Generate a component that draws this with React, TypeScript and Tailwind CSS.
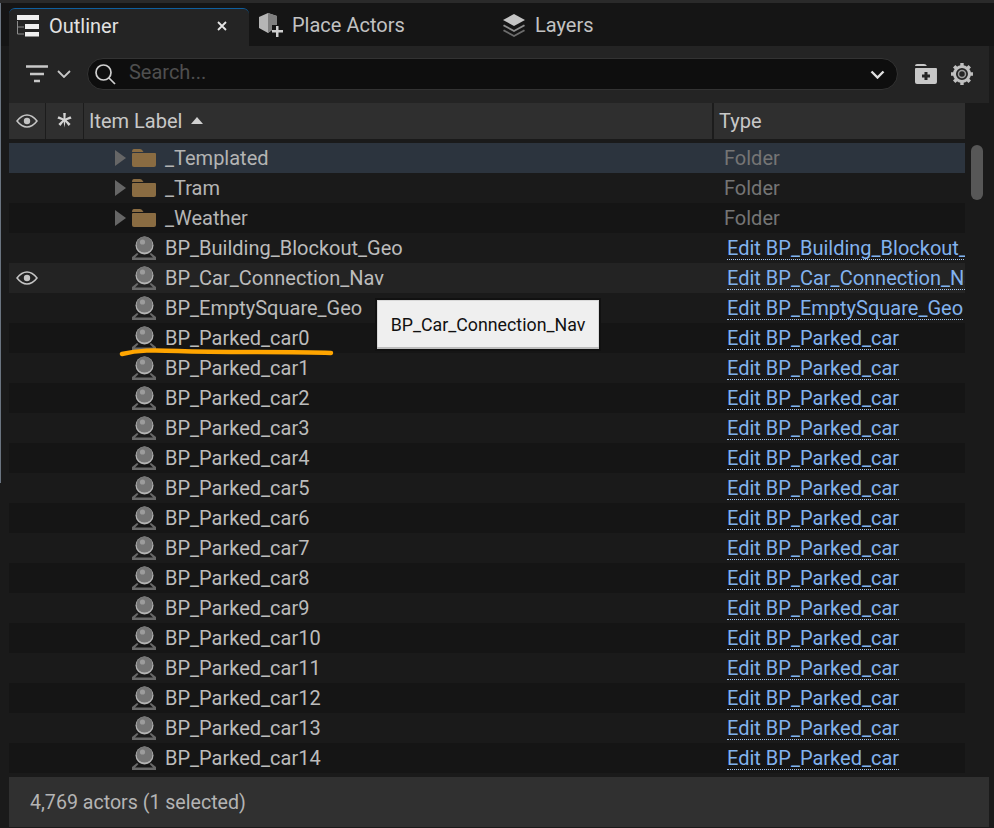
const F = "font-['Roboto',sans-serif]";

function Eye() {
  return (
    <svg width="22" height="14" viewBox="0 0 22 14" fill="none">
      <path d="M1 7 C4.5 2.5 7.5 1 11 1 C14.5 1 17.5 2.5 21 7 C17.5 11.5 14.5 13 11 13 C7.5 13 4.5 11.5 1 7 Z" stroke="#c4c4c4" strokeWidth="1.5" />
      <circle cx="11" cy="7" r="3.2" fill="#c4c4c4" />
    </svg>
  );
}

function Folder() {
  return (
    <svg width="24" height="18" viewBox="0 0 24 18">
      <path d="M0 3 Q0 0 2 0 H8 Q10 0 11.5 3 Z" fill="#8a6c42" />
      <path d="M0 5 Q0 4 1 4 H23 Q24 4 24 5 V16 Q24 18 22 18 H2 Q0 18 0 16 Z" fill="#8a6c42" />
    </svg>
  );
}

function Actor() {
  return (
    <svg width="24" height="24" viewBox="0 0 24 24">
      <path d="M5 17 L0 21 V24 H24 V21 L19 17 L17.5 18 L21 21.5 H3 L6.5 18 Z" fill="#686868" />
      <circle cx="12.5" cy="9.5" r="9" fill="#b4b4b4" />
      <circle cx="12.5" cy="8.5" r="8" fill="#757575" />
      <circle cx="10.5" cy="6" r="2.6" fill="#9c9c9c" />
    </svg>
  );
}

const rows = [
  { n: "_Templated", folder: true, bg: "bg-[#2c343e]" },
  { n: "_Tram", folder: true, bg: "bg-[#1a1a1a]" },
  { n: "_Weather", folder: true, bg: "bg-[#151515]" },
  { n: "BP_Building_Blockout_Geo", t: "Edit BP_Building_Blockout_Geo", bg: "bg-[#1a1a1a]" },
  { n: "BP_Car_Connection_Nav", t: "Edit BP_Car_Connection_Nav", bg: "bg-[#232323]", eye: true },
  { n: "BP_EmptySquare_Geo", t: "Edit BP_EmptySquare_Geo", bg: "bg-[#1a1a1a]" },
  ...Array.from({ length: 15 }, (_, i) => ({
    n: `BP_Parked_car${i}`,
    t: "Edit BP_Parked_car",
    bg: i % 2 === 0 ? "bg-[#151515]" : "bg-[#1a1a1a]",
  })),
] as { n: string; t?: string; folder?: boolean; bg: string; eye?: boolean }[];

export default function App() {
  return (
    <div className={`relative flex h-[828px] w-[994px] flex-col overflow-hidden bg-[#1a1a1a] pl-[9px] pr-[5px] text-[20px] ${F}`}>
      <div className="absolute left-0 top-0 h-[3px] w-full bg-[#2a2a2a]" />
      <div className="absolute left-0 top-[3px] h-[480px] w-[1px] bg-[#6a7480]" />

      {/* tab bar */}
      <div className="-ml-[9px] -mr-[5px] mt-[3px] flex h-[43px] shrink-0 items-end bg-[#151515] pl-[9px]">
        <div className="flex h-[38px] w-[240px] items-center rounded-t-[6px] border-t border-t-[#0f5f9e] bg-[#242424] pb-[4px] pl-[8px] pr-[22px] text-[#e2e2e2]">
          <svg width="22" height="22" viewBox="0 0 22 22">
            <rect x="0" y="0" width="22" height="5" fill="#f0f0f0" />
            <rect x="8" y="9" width="14" height="5" fill="#f0f0f0" />
            <rect x="8" y="17" width="14" height="4.5" fill="#f0f0f0" />
            <path d="M0.5 6 V19 H7 M0.5 12 H7" stroke="#8c8c8c" strokeWidth="1" fill="none" />
          </svg>
          <span className="ml-[10px] flex-1">Outliner</span>
          <svg width="10" height="10" viewBox="0 0 10 10"><path d="M1 1 L9 9 M9 1 L1 9" stroke="#e5e5e5" strokeWidth="1.8" /></svg>
        </div>
        <div className="flex h-[38px] w-[240px] items-center pb-[4px] pl-[10px] text-[#c2c2c2]">
          <svg width="24" height="24" viewBox="0 0 24 24">
            <path d="M0 4 L9 0 L18 3 V12 H13 V17 L9 20 L0 15 Z" fill="#b5b5b5" />
            <path d="M9 0 L18 3 V12 H13 V17 L9 20 Z" fill="#7f7f7f" />
            <path d="M17 13 H19.5 V17 H24 V19.5 H19.5 V24 H17 V19.5 H13 V17 H17 Z" fill="#d0d0d0" />
          </svg>
          <span className="ml-[9px]">Place Actors</span>
        </div>
        <div className="flex h-[38px] items-center pb-[4px] pl-[13px] text-[#c2c2c2]">
          <svg width="24" height="24" viewBox="0 0 24 24">
            <path d="M12 1 L23 7 L12 13 L1 7 Z" fill="#c4c4c4" />
            <path d="M2 11.5 L12 17 L22 11.5 L23 13 L12 19 L1 13 Z" fill="#8c8c8c" />
            <path d="M2 16.5 L12 22 L22 16.5 L23 18 L12 24 L1 18 Z" fill="#6c6c6c" />
          </svg>
          <span className="ml-[9px]">Layers</span>
        </div>
      </div>

      {/* toolbar */}
      <div className="flex h-[57px] shrink-0 items-center bg-[#242424] pb-[1px] pl-[17px] pr-[15px]">
        <svg width="22" height="18" viewBox="0 0 22 18"><path d="M0 1.5 H22 M4 9 H18 M8 16 H14" stroke="#c8c8c8" strokeWidth="2.6" /></svg>
        <svg className="ml-[9px]" width="14" height="8" viewBox="0 0 14 8" fill="none"><path d="M1 1 L7 7 L13 1" stroke="#c8c8c8" strokeWidth="1.8" /></svg>
        <div className="ml-[16px] flex h-[32px] w-[812px] items-center rounded-full border border-[#333] bg-[#0e0e0e] pl-[5px] pr-[12px]">
          <svg width="24" height="24" viewBox="0 0 24 24" fill="none">
            <circle cx="10.5" cy="10.5" r="7.5" stroke="#d0d0d0" strokeWidth="1.7" />
            <path d="M16 16 L22 22" stroke="#d0d0d0" strokeWidth="1.7" />
          </svg>
          <span className="ml-[12px] mb-[4px] flex-1 text-[#4f4f4f]">Search...</span>
          <svg width="15" height="9" viewBox="0 0 15 9" fill="none"><path d="M1.5 1.5 L7.5 7.5 L13.5 1.5" stroke="#e0e0e0" strokeWidth="2.4" /></svg>
        </div>
        <svg className="ml-[17px]" width="22" height="20" viewBox="0 0 22 20">
          <path d="M0 2 Q0 0 2 0 H9 Q11 0 12 2 H0 Z" fill="#c8c8c8" />
          <path d="M0 5 Q0 4 1 4 H21 Q22 4 22 5 V18 Q22 20 20 20 H2 Q0 20 0 18 Z" fill="#c8c8c8" />
          <path d="M9.5 8 H12.5 V10.5 H15 V13.5 H12.5 V16 H9.5 V13.5 H7 V10.5 H9.5 Z" fill="#242424" />
        </svg>
        <svg className="ml-[13px]" width="24" height="24" viewBox="0 0 24 24" fill="none">
          <circle cx="12" cy="12" r="7.5" stroke="#c0c0c0" strokeWidth="3" />
          <circle cx="12" cy="12" r="3.5" stroke="#9a9a9a" strokeWidth="1.5" />
          <path d="M12 1 V5 M12 19 V23 M1 12 H5 M19 12 H23 M4.2 4.2 L7 7 M17 17 L19.8 19.8 M19.8 4.2 L17 7 M7 17 L4.2 19.8" stroke="#c0c0c0" strokeWidth="3.4" />
        </svg>
      </div>

      {/* header */}
      <div className="flex h-[36px] w-[956px] shrink-0 bg-[#2f2f2f] text-[#c8c8c8]">
        <div className="flex w-[36px] items-center justify-center"><Eye /></div>
        <div className="flex w-[39px] items-center justify-center border-x border-[#1c1c1c] pb-[2px]">
          <svg width="15" height="15" viewBox="0 0 15 15"><path d="M6.2 0 H8.8 L8.4 5.4 L13.4 3.2 L14.6 5.5 L9.6 7.2 L13.6 11 L11.6 13 L8.4 8.8 L7.5 14.5 L6.6 8.8 L3.4 13 L1.4 11 L5.4 7.2 L0.4 5.5 L1.6 3.2 L6.6 5.4 Z" fill="#d4d4d4" /></svg>
        </div>
        <div className="flex w-[628px] items-center pl-[5px]">
          <span>Item Label</span>
          <svg className="ml-[9px] mb-[2px]" width="12" height="7" viewBox="0 0 12 7"><path d="M6 0 L12 7 H0 Z" fill="#d0d0d0" /></svg>
        </div>
        <div className="flex flex-1 items-center border-l-2 border-[#1c1c1c] pl-[5px]">Type</div>
      </div>

      {/* list + scrollbar */}
      <div className="mt-[4px] flex h-[634px] shrink-0">
        <div className="w-[956px] overflow-hidden">
          {rows.map((r) => (
            <div key={r.n} className={`flex h-[30px] items-center ${r.bg}`}>
              <div className="flex w-[36px] shrink-0 justify-center">{r.eye && <Eye />}</div>
              <div className="w-[70px] shrink-0" />
              {r.folder ? (
                <svg className="mr-[6px] shrink-0" width="11" height="16" viewBox="0 0 11 16"><path d="M0 0 L11 8 L0 16 Z" fill="#666" /></svg>
              ) : (
                <div className="w-[17px] shrink-0" />
              )}
              <div className="flex w-[24px] shrink-0 justify-center">{r.folder ? <Folder /> : <Actor />}</div>
              <div className={`ml-[9px] w-[549px] shrink-0 ${r.folder ? "text-[#b4b4b4]" : "text-[#bcbcbc]"}`}>{r.n}</div>
              {r.t ? (
                <div className="min-w-0 flex-1 overflow-hidden whitespace-nowrap pl-[13px]">
                  <span className="inline-block border-b border-dotted border-[#a9c8f0] leading-[22px] text-[#82b2ee]">{r.t}</span>
                </div>
              ) : (
                <div className="pl-[10px] text-[#757575]">Folder</div>
              )}
            </div>
          ))}
        </div>
        <div className="ml-[6px] mt-[2px] h-[55px] w-[12px] rounded-full bg-[#575757]" />
      </div>

      {/* footer */}
      <div className="flex h-[50px] shrink-0 items-center bg-[#303030] pl-[21px] pt-[1px] text-[19.6px] text-[#b4b4b4]">4,769 actors (1 selected)</div>

      {/* tooltip */}
      <div className="absolute left-[375px] top-[298px] flex h-[53px] w-[226px] items-center justify-center border-2 border-[#111] bg-[#efefef] pt-[1px] text-[17.8px] text-[#111] shadow-[inset_0_-2px_0_#bdbdbd,inset_0_0_0_1px_#d8d8d8]">
        BP_Car_Connection_Nav
      </div>

      {/* hand-drawn underline */}
      <svg className="absolute left-[118px] top-[346px]" width="218" height="14" viewBox="0 0 218 14" fill="none">
        <path d="M4 8 C20 4 35 4 60 5 C110 7 170 5 213 7" stroke="#ffa500" strokeWidth="4.5" strokeLinecap="round" />
      </svg>
    </div>
  );
}
